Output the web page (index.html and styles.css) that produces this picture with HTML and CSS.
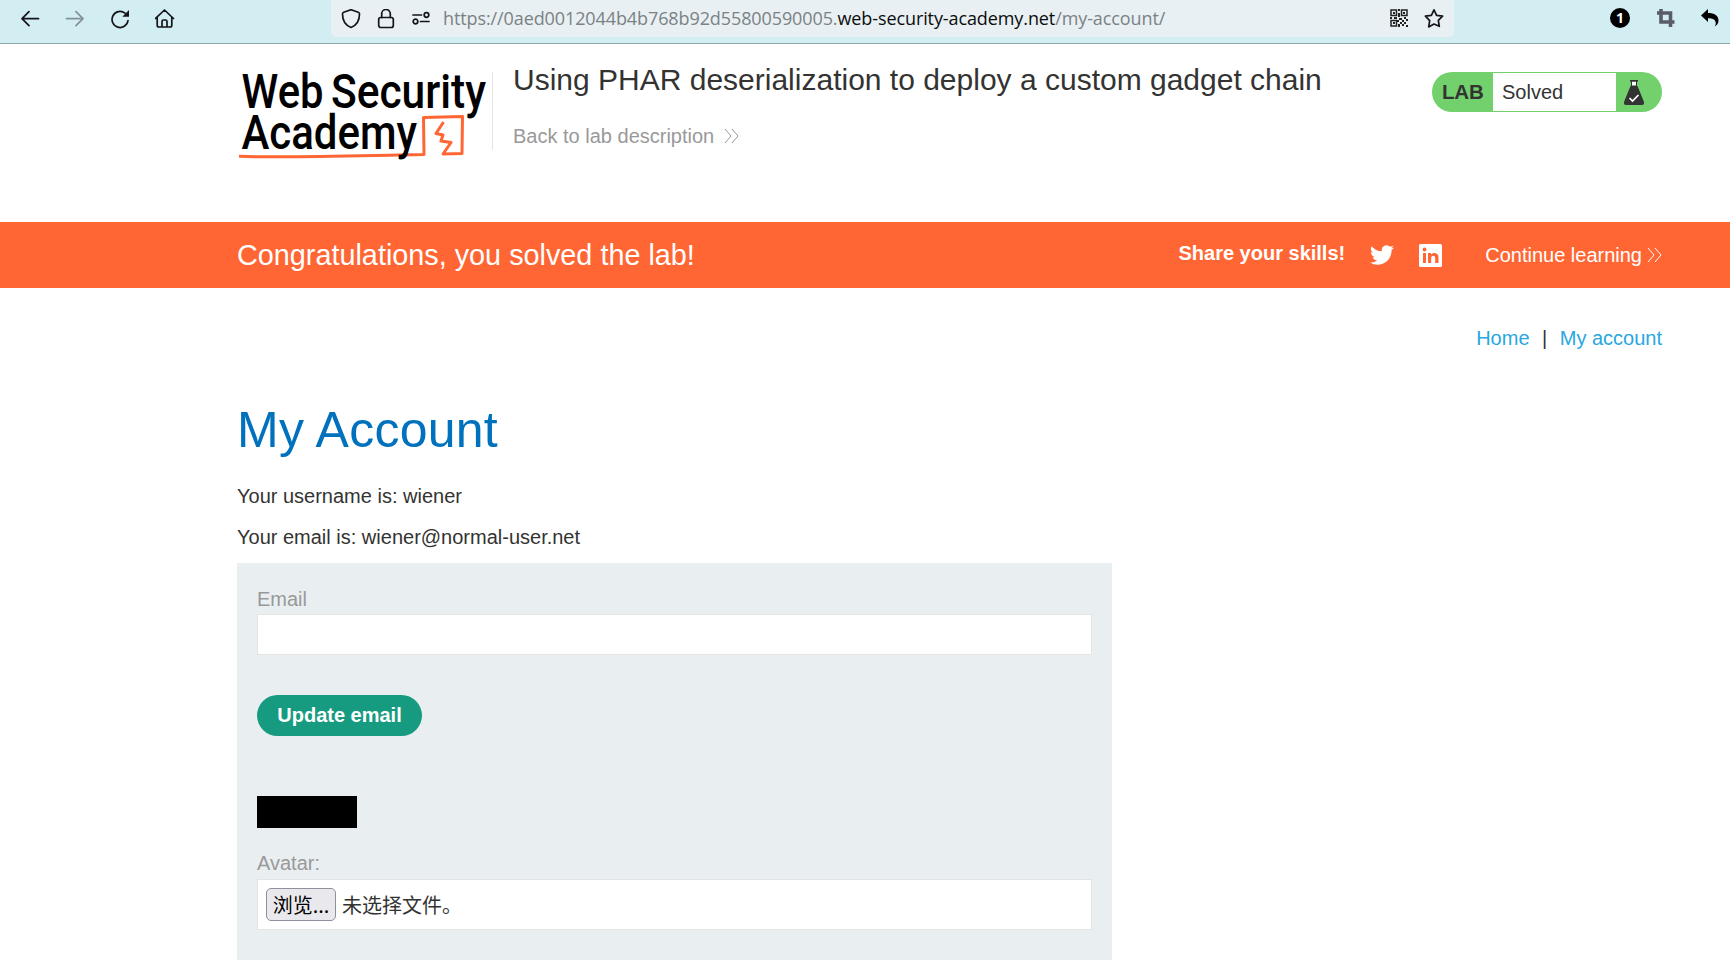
FILE: index.html
```html
<!DOCTYPE html>
<html lang="en">
<head>
<meta charset="utf-8">
<title>Using PHAR deserialization to deploy a custom gadget chain</title>
<link rel="stylesheet" href="styles.css">
</head>
<body>
<div class="toolbar">
  <div class="nav-buttons">
    <svg width="20" height="20" viewBox="0 0 20 20" class="line"><path d="M18.500 9.700H2M9 2.700L2 9.700l7 7"/></svg>
    <svg width="20" height="20" viewBox="0 0 20 20" class="line dim"><path d="M1.500 9.700H18M11 2.700l7 7-7 7"/></svg>
    <svg width="20" height="20" viewBox="0 0 20 20" class="line"><path d="M18 11.500A8 8 0 1 1 15 4.200"/><path d="M19 1v6.700h-6.700z" fill="#15141a" stroke="none"/></svg>
    <svg width="20" height="20" viewBox="0 0 20 20" class="line"><path d="M.5 9.500L9.500 1l9 8.500M2.200 8v8.300q0 1.700 1.700 1.700h11.200q1.700 0 1.700-1.700V8M7 18v-5.500q0-1.500 1.500-1.500h2q1.500 0 1.500 1.500V18"/></svg>
  </div>
  <div class="urlbar">
    <svg width="20" height="20" viewBox="0 0 20 20" class="line"><path d="M10 .7l7.300 2.600q1.200.4 1.200 1.700C18.500 11.500 15 16.500 10 18.500 5 16.500 1.500 11.500 1.500 5q0-1.300 1.200-1.700z"/></svg>
    <svg width="18" height="20" viewBox="0 0 18 20" class="line"><rect x="1.700" y="8.500" width="14.600" height="10" rx="2"/><path d="M4.700 8.500V4.800a4.300 4.300 0 0 1 8.600 0v3.700"/></svg>
    <svg width="20" height="16" viewBox="0 0 20 16" class="line"><path d="M2 4h8.500M9.500 10.500H18"/><circle cx="15.500" cy="4" r="2.300"/><circle cx="4.500" cy="10.500" r="2.300"/></svg>
    <div class="url">https://0aed0012044b4b768b92d55800590005.<b>web-security-academy.net</b>/my-account/</div>
    <svg width="18" height="18" viewBox="0 0 18 18" class="qr"><path fill="none" stroke="#222" stroke-width="1.500" d="M1 1h5.500v5.500H1zM11.500 1H17v5.500h-5.500zM1 11.500h5.500V17H1z"/><path fill="#222" d="M3 3h2v2H3zM13 3h2v2h-2zM3 13h2v2H3zM8 0h2v2H8zM8 4h2v4H8zM0 8h2v2H0zM4 8h3v2H4zM9 9h3v2H9zM14 8h2v2h-2zM16 10h2v2h-2zM7 11h2v2H7zM12 11h2v2h-2zM10 13h2v2h-2zM14 13h2v2h-2zM8 15h2v3H8zM12 15h2v2h-2zM16 16h2v2h-2z"/></svg>
    <svg width="20" height="20" viewBox="0 0 20 20" class="line star"><path d="M10 .8l2.600 5.500 6 .8-4.300 4.200 1 6L10 15l-5.300 2.900 1-6.300L1.400 7.200l6-.9z"/></svg>
  </div>
  <div class="extensions">
    <svg width="20" height="20" viewBox="0 0 20 20"><circle cx="10" cy="10" r="10"/><text x="10" y="15" text-anchor="middle" class="badge">1</text></svg>
    <svg width="18" height="18" viewBox="0 0 18 18"><path fill="none" stroke="#5b5b66" stroke-width="3.600" d="M0 4h13.500V18M4 0v13H17.500"/></svg>
    <svg width="18" height="18" viewBox="0 0 18 18"><path d="M0 6.500L7 0v4c6.500 0 10.500 2.500 10.500 7.500 0 3-1.500 4.800-4.300 6 1.300-1 1.700-2.200 1.500-3.700C14.300 10.300 11.500 9.300 7 9.300V13z"/></svg>
  </div>
</div>

<header class="lab-header">
  <svg class="logo" width="255" height="106" viewBox="0 -6 255 106">
    <g class="logo-text">
      <text x="4.500" y="48" textLength="82" lengthAdjust="spacingAndGlyphs">Web</text>
      <text x="94" y="48" textLength="155" lengthAdjust="spacingAndGlyphs">Security</text>
    </g>
    <path class="logo-line" d="M2 96.300C55 98 125 95.500 187 94.500L186.500 57.500 225.500 56.500 225 93.500 206 94 214 82.500 204 81 206 75 199 73.500 206.500 62"/>
    <text class="logo-text" x="4.500" y="89" textLength="175.500" lengthAdjust="spacingAndGlyphs">Academy</text>
  </svg>
  <div class="title">
    <h2>Using PHAR deserialization to deploy a custom gadget chain</h2>
    <a class="back">Back to lab description <svg width="15" height="16" viewBox="0 0 15 16"><path d="M1 1l6 7-6 7M8 1l6 7-6 7"/></svg></a>
  </div>
  <div class="status">
    <span class="lab">LAB</span>
    <span class="solved">Solved</span>
    <svg width="46" height="40" viewBox="0 0 46 40"><path fill="#fff" stroke="#333" d="M15.500 9h5v5h-5z"/><path fill="#333" d="M14 8h8v1.500h-8zM14.500 14h7l6.300 15.500q1 3.500-2 3.500H10.200q-3 0-2-3.500z"/><path fill="none" stroke="#fff" stroke-width="1.700" d="M13.500 26l3 3 6-6"/></svg>
  </div>
</header>

<section class="banner">
  <h4>Congratulations, you solved the lab!</h4>
  <strong>Share your skills!</strong>
  <svg class="twitter" width="24" height="24" viewBox="0 0 24 24"><path fill="#fff" d="M24 4.560a9.800 9.800 0 0 1-2.830.770 4.900 4.900 0 0 0 2.170-2.720 9.900 9.900 0 0 1-3.130 1.190 4.920 4.920 0 0 0-8.380 4.480A13.970 13.970 0 0 1 1.670 3.150 4.920 4.920 0 0 0 3.190 9.720a4.900 4.900 0 0 1-2.230-.61c-.05 2.280 1.580 4.420 3.950 4.890a4.900 4.900 0 0 1-2.220.080 4.930 4.930 0 0 0 4.600 3.420A9.870 9.870 0 0 1 0 19.540a13.940 13.940 0 0 0 7.550 2.210c9.140 0 14.310-7.720 14-14.640A10 10 0 0 0 24 4.560z"/></svg>
  <svg class="linkedin" width="23" height="23" viewBox="0 0 23 23"><rect width="23" height="23" rx="1.500" fill="#fff"/><path fill="#f63" d="M4 9h3v10H4zM9 9h3v1.500c2-2.600 7.500-2.300 7.500 2.800V19h-3.300v-5c0-3.300-4-3-4 0v5H9z"/><circle cx="5.500" cy="5.500" r="1.900" fill="#f63"/></svg>
  <a>Continue learning <svg width="15" height="16" viewBox="0 0 15 16"><path d="M1 1l6 7-6 7M8 1l6 7-6 7"/></svg></a>
</section>

<main>
  <nav><a>Home</a><span>|</span><a>My account</a></nav>
  <h1>My Account</h1>
  <p>Your username is: wiener</p>
  <p>Your email is: wiener@normal-user.net</p>
  <form class="account-form">
    <label>Email</label>
    <input type="text" class="field">
    <button type="button" class="update">Update email</button>
    <div class="avatar"></div>
    <label>Avatar:</label>
    <div class="file-field"><span class="browse">浏览...</span><span class="file-name">未选择文件。</span></div>
  </form>
</main>
</body>
</html>
```
FILE: styles.css
```css
* { box-sizing: border-box; }
body {
  margin: 0;
  height: 960px;
  overflow: hidden;
  background: #fff;
  color: #333332;
  font: 20px/20px "Liberation Sans", Arial, sans-serif;
}
h1, h2, h4, p { margin: 0; font-weight: 400; }
svg { display: block; flex: none; }

.toolbar {
  display: flex;
  height: 44px;
  background: #d2eef3;
  border-bottom: 1px solid #8fa5a9;
}
.nav-buttons {
  display: flex;
  gap: 25px;
  width: 331px;
  padding: 9px 0 0 20px;
}
.line { fill: none; stroke: #15141a; stroke-width: 1.7; stroke-linejoin: round; stroke-linecap: round; }
.dim { opacity: .42; }
.urlbar {
  display: flex;
  align-items: center;
  width: 1123px;
  height: 37px;
  padding: 0 10px 0 10px;
  border-radius: 0 0 5px 5px;
  background: #e8f0f3;
}
.urlbar .line + .line { margin-left: 16px; }
.url {
  flex: 1;
  margin: -2px 0 0 12px;
  color: #7b8285;
  font: 18px/24px "Open Sans", "Noto Sans", sans-serif;
  letter-spacing: -.1px;
  white-space: nowrap;
}
.url b { color: #0c0c0d; font-weight: 400; }
.qr { margin-top: -1px; }
.urlbar .star { margin-left: 16px; }
.extensions {
  display: flex;
  align-items: center;
  justify-content: space-between;
  width: 276px;
  height: 36px;
  padding: 0 11px 0 156px;
}
.badge { fill: #fff; font: bold 14px "Open Sans", sans-serif; }

.lab-header { display: flex; height: 178px; padding: 16px 68px 0 237px; }
.logo { margin-top: -6px; }
.logo-text { fill: #000; font: 500 48px Roboto, sans-serif; }
.logo-line { fill: none; stroke: #f63; stroke-width: 3; stroke-linejoin: round; }
.title {
  flex: 1;
  height: 78px;
  margin-top: 12px;
  padding-left: 20px;
  border-left: 1px solid #e4e4e4;
}
.title h2 { margin-top: -8px; font-size: 30px; line-height: 32px; white-space: nowrap; }
.back { display: flex; gap: 10px; align-items: center; margin-top: 30px; color: #999; }
.back svg, .banner a svg { fill: none; stroke: currentColor; stroke-width: 1; }
.status {
  display: flex;
  width: 230px;
  height: 40px;
  margin-top: 12px;
  border-radius: 20px;
  background: #72d16c;
  line-height: 40px;
}
.lab { width: 61px; padding-left: 10px; font-size: 20.500px; letter-spacing: -.2px; font-weight: 700; }
.solved { width: 123px; height: 38px; margin-top: 1px; padding-left: 9px; background: #fff; line-height: 38px; }

.banner {
  display: flex;
  align-items: center;
  height: 66px;
  padding: 0 68px 0 237px;
  background: #f63;
  color: #fff;
}
.banner h4 { flex: 1; font-size: 28.800px; line-height: 32px; }
.banner strong { margin-top: -4px; }
.twitter { margin-left: 25px; }
.linkedin { margin-left: 25px; }
.banner a { display: flex; gap: 5px; align-items: center; margin-left: 43px; }

main { padding: 40px 68px 0 237px; }
nav { display: flex; justify-content: flex-end; gap: 12.500px; color: #29a7e1; }
nav span { color: #333332; }
h1 { margin-top: 52px; color: #0071bd; font-size: 50px; line-height: 60px; letter-spacing: .25px; }
h1 + p { margin-top: 26px; }
p + p { margin-top: 21px; }
.account-form {
  display: flex;
  flex-direction: column;
  align-items: flex-start;
  width: 875px;
  height: 420px;
  margin-top: 16px;
  padding: 26px 20px 0;
  background: #e9eff1;
}
label { color: #999; }
.field { width: 835px; height: 41px; margin-top: 5px; border: 1px solid #e4e4e4; background: #fff; }
.update {
  width: 165px;
  height: 41px;
  margin-top: 40px;
  padding: 0;
  border: 0;
  border-radius: 21px;
  background: #169b80;
  color: #fff;
  font: bold 20px/41px "Liberation Sans", Arial, sans-serif;
}
.avatar { width: 100px; height: 32px; margin: 60px 0 25px; background: #000; }
.file-field {
  display: flex;
  align-items: center;
  gap: 6px;
  width: 835px;
  height: 51px;
  margin-top: 6px;
  padding-left: 8px;
  border: 1px solid #e4e4e4;
  background: #fff;
  font-family: "Noto Sans CJK SC", sans-serif;
}
.browse {
  width: 70px;
  height: 33px;
  border: 1px solid #8f8f9d;
  border-radius: 5px;
  background: #e9e9ed;
  color: #000;
  line-height: 31px;
  text-align: center;
}
```
